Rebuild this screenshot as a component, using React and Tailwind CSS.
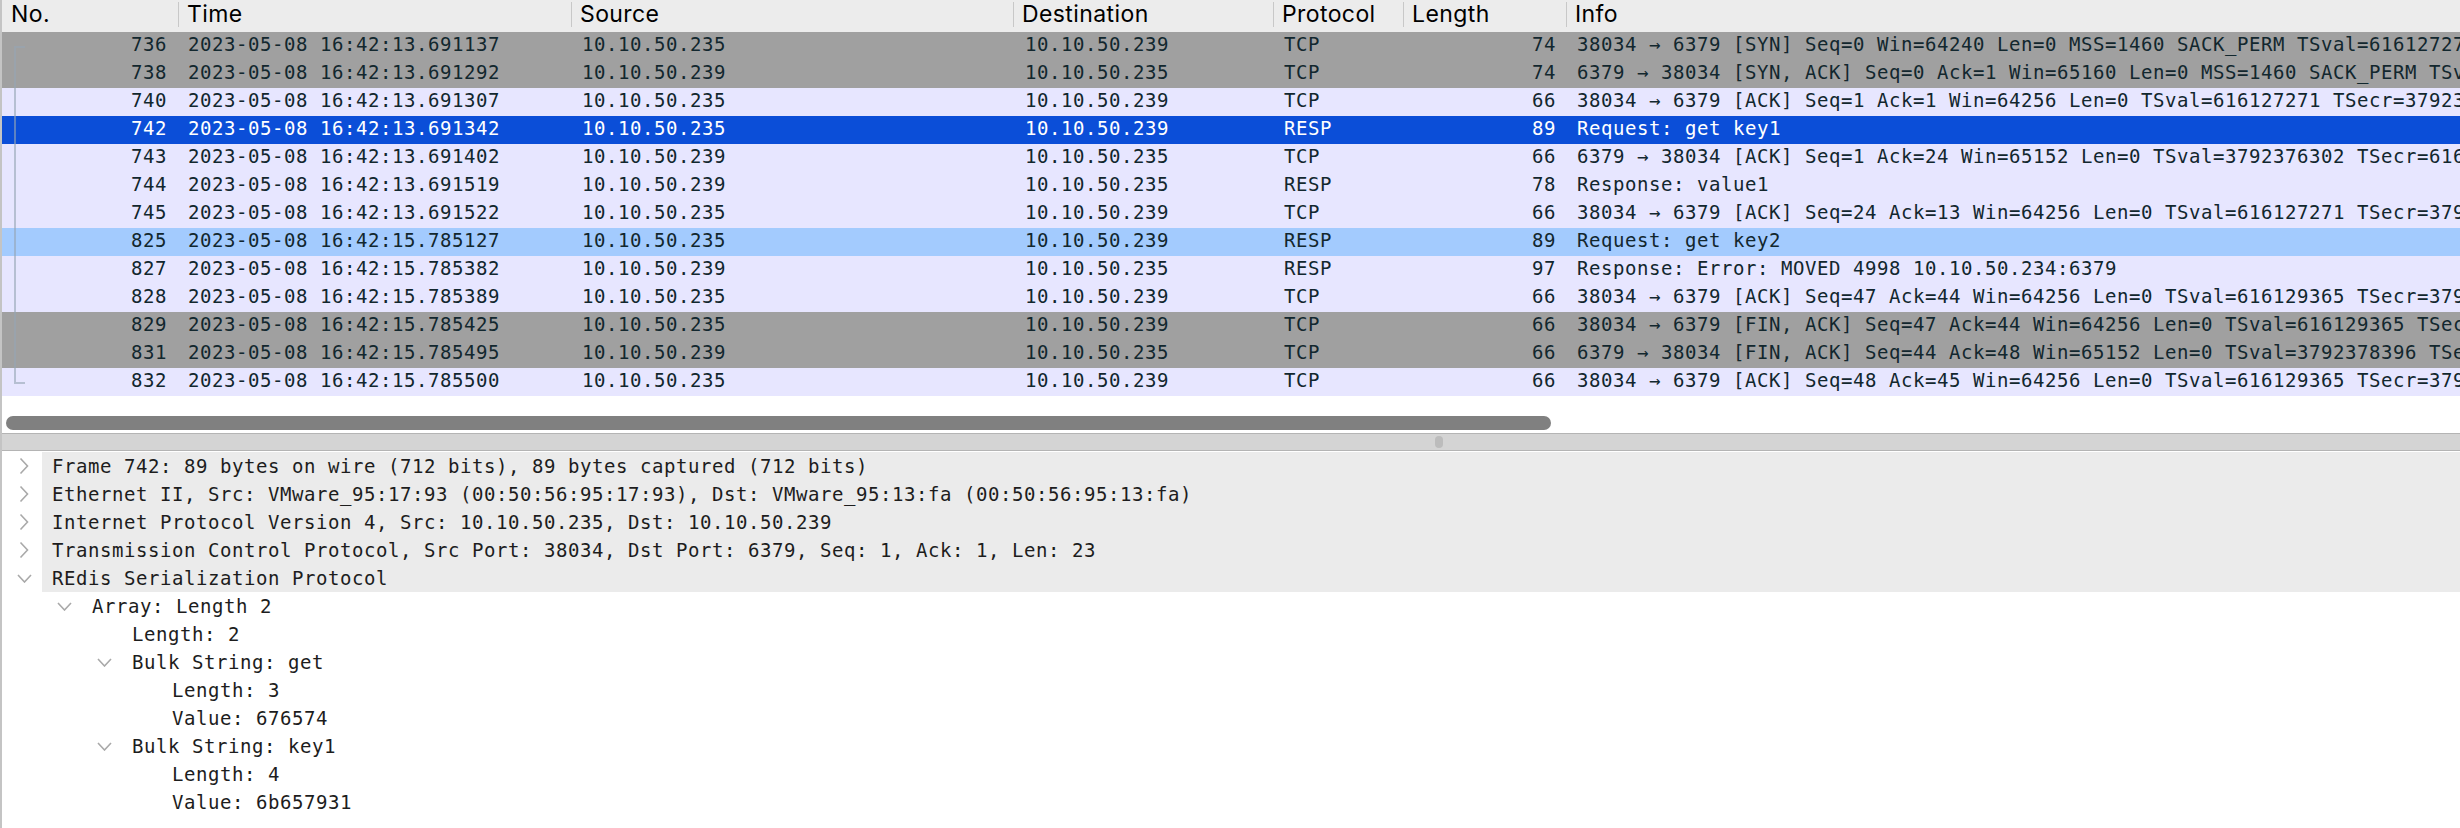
import React from 'react';

const COLS = 'grid grid-cols-[176px_393px_442px_260px_130px_163px_minmax(0,1fr)]';

const ROW_STYLE = {
  grey: 'bg-[#a0a0a0] text-[#12272e]',
  tcp: 'bg-[#e7e6ff] text-[#12272e]',
  selected: 'bg-[#0b4ed8] text-white',
  related: 'bg-[#a3cbfe] text-[#12272e]',
};

const ROWS = [
  { no: 736, time: '2023-05-08 16:42:13.691137', src: '10.10.50.235', dst: '10.10.50.239', proto: 'TCP', len: 74, info: '38034 → 6379 [SYN] Seq=0 Win=64240 Len=0 MSS=1460 SACK_PERM TSval=616127271 TSecr=0 WS=128', kind: 'grey' },
  { no: 738, time: '2023-05-08 16:42:13.691292', src: '10.10.50.239', dst: '10.10.50.235', proto: 'TCP', len: 74, info: '6379 → 38034 [SYN, ACK] Seq=0 Ack=1 Win=65160 Len=0 MSS=1460 SACK_PERM TSval=3792376302 TSecr=616127271 WS=128', kind: 'grey' },
  { no: 740, time: '2023-05-08 16:42:13.691307', src: '10.10.50.235', dst: '10.10.50.239', proto: 'TCP', len: 66, info: '38034 → 6379 [ACK] Seq=1 Ack=1 Win=64256 Len=0 TSval=616127271 TSecr=3792376302', kind: 'tcp' },
  { no: 742, time: '2023-05-08 16:42:13.691342', src: '10.10.50.235', dst: '10.10.50.239', proto: 'RESP', len: 89, info: 'Request: get key1', kind: 'selected' },
  { no: 743, time: '2023-05-08 16:42:13.691402', src: '10.10.50.239', dst: '10.10.50.235', proto: 'TCP', len: 66, info: '6379 → 38034 [ACK] Seq=1 Ack=24 Win=65152 Len=0 TSval=3792376302 TSecr=616127271', kind: 'tcp' },
  { no: 744, time: '2023-05-08 16:42:13.691519', src: '10.10.50.239', dst: '10.10.50.235', proto: 'RESP', len: 78, info: 'Response: value1', kind: 'tcp' },
  { no: 745, time: '2023-05-08 16:42:13.691522', src: '10.10.50.235', dst: '10.10.50.239', proto: 'TCP', len: 66, info: '38034 → 6379 [ACK] Seq=24 Ack=13 Win=64256 Len=0 TSval=616127271 TSecr=3792376302', kind: 'tcp' },
  { no: 825, time: '2023-05-08 16:42:15.785127', src: '10.10.50.235', dst: '10.10.50.239', proto: 'RESP', len: 89, info: 'Request: get key2', kind: 'related' },
  { no: 827, time: '2023-05-08 16:42:15.785382', src: '10.10.50.239', dst: '10.10.50.235', proto: 'RESP', len: 97, info: 'Response: Error: MOVED 4998 10.10.50.234:6379', kind: 'tcp' },
  { no: 828, time: '2023-05-08 16:42:15.785389', src: '10.10.50.235', dst: '10.10.50.239', proto: 'TCP', len: 66, info: '38034 → 6379 [ACK] Seq=47 Ack=44 Win=64256 Len=0 TSval=616129365 TSecr=3792378396', kind: 'tcp' },
  { no: 829, time: '2023-05-08 16:42:15.785425', src: '10.10.50.235', dst: '10.10.50.239', proto: 'TCP', len: 66, info: '38034 → 6379 [FIN, ACK] Seq=47 Ack=44 Win=64256 Len=0 TSval=616129365 TSecr=3792378396', kind: 'grey' },
  { no: 831, time: '2023-05-08 16:42:15.785495', src: '10.10.50.239', dst: '10.10.50.235', proto: 'TCP', len: 66, info: '6379 → 38034 [FIN, ACK] Seq=44 Ack=48 Win=65152 Len=0 TSval=3792378396 TSecr=616129365', kind: 'grey' },
  { no: 832, time: '2023-05-08 16:42:15.785500', src: '10.10.50.235', dst: '10.10.50.239', proto: 'TCP', len: 66, info: '38034 → 6379 [ACK] Seq=48 Ack=45 Win=64256 Len=0 TSval=616129365 TSecr=3792378396', kind: 'tcp' },
];

// level: indent depth, open: true/false for expandable, null for leaf
const DETAILS = [
  { level: 0, open: false, text: 'Frame 742: 89 bytes on wire (712 bits), 89 bytes captured (712 bits)' },
  { level: 0, open: false, text: 'Ethernet II, Src: VMware_95:17:93 (00:50:56:95:17:93), Dst: VMware_95:13:fa (00:50:56:95:13:fa)' },
  { level: 0, open: false, text: 'Internet Protocol Version 4, Src: 10.10.50.235, Dst: 10.10.50.239' },
  { level: 0, open: false, text: 'Transmission Control Protocol, Src Port: 38034, Dst Port: 6379, Seq: 1, Ack: 1, Len: 23' },
  { level: 0, open: true, text: 'REdis Serialization Protocol' },
  { level: 1, open: true, text: 'Array: Length 2' },
  { level: 2, open: null, text: 'Length: 2' },
  { level: 2, open: true, text: 'Bulk String: get' },
  { level: 3, open: null, text: 'Length: 3' },
  { level: 3, open: null, text: 'Value: 676574' },
  { level: 2, open: true, text: 'Bulk String: key1' },
  { level: 3, open: null, text: 'Length: 4' },
  { level: 3, open: null, text: 'Value: 6b657931' },
];

const INDENT = ['w-0', 'w-[40px]', 'w-[80px]', 'w-[120px]'];

const ChevronRight = () => (
  <svg width="10" height="18" viewBox="0 0 10 18" fill="none">
    <path d="M1.5 1.5 L8.5 9 L1.5 16.5" stroke="#a9a9a9" strokeWidth="1.6" />
  </svg>
);

const ChevronDown = () => (
  <svg width="15" height="9" viewBox="0 0 15 9" fill="none">
    <path d="M1 1 L7.5 8 L14 1" stroke="#a9a9a9" strokeWidth="1.6" />
  </svg>
);

const PacketRow = ({ row }) => (
  <div className={`${COLS} h-[28px] leading-[24px] whitespace-nowrap ${ROW_STYLE[row.kind]}`}>
    <div className="text-right pr-[11px]">{row.no}</div>
    <div className="pl-[10px]">{row.time}</div>
    <div className="pl-[11px]">{row.src}</div>
    <div className="pl-[12px]">{row.dst}</div>
    <div className="pl-[11px]">{row.proto}</div>
    <div className="text-right pr-[10px]">{row.len}</div>
    <div className="pl-[11px] overflow-hidden">{row.info}</div>
  </div>
);

export default function App() {
  const mono = "font-['DejaVu_Sans_Mono',monospace] text-[19px] tracking-[0.56px]";

  return (
    <div className="w-[2460px] h-[828px] overflow-hidden bg-white border-l-2 border-[#c4c4c4]">
      {/* packet list */}
      <div className="h-[433px] flex flex-col">
        <div className={`${COLS} h-[32px] bg-[#ececec] text-black font-['Inter',sans-serif] text-[23px] tracking-[0.4px] whitespace-nowrap`}>
          <div className="pl-[9px] leading-[29px]">No.</div>
          {['Time', 'Source', 'Destination', 'Protocol', 'Length', 'Info'].map(h => (
            <div key={h} className="flex items-start overflow-hidden">
              <div className="mt-[2px] h-[25px] w-px shrink-0 bg-[#c8c8c8]" />
              <span className="ml-[8px] leading-[29px]">{h}</span>
            </div>
          ))}
        </div>

        <div className={`relative ${mono}`}>
          {ROWS.map(r => <PacketRow key={r.no} row={r} />)}
          {/* conversation bracket */}
          <div className="absolute left-[12px] top-[14px] w-[2px] h-[338px] bg-[rgba(150,165,180,0.6)]" />
          <div className="absolute left-[14px] top-[14px] w-[9px] h-[2px] bg-[rgba(150,165,180,0.6)]" />
          <div className="absolute left-[14px] top-[350px] w-[9px] h-[2px] bg-[rgba(150,165,180,0.6)]" />
        </div>

        <div className="pt-[20px] pl-[4px]">
          <div className="w-[1545px] h-[14px] rounded-full bg-[#808080]" />
        </div>
      </div>

      {/* splitter */}
      <div className="h-[18px] border-y border-[#b4b4b4] bg-[#d4d4d4] flex items-center pl-[1433px]">
        <div className="w-[8px] h-[12px] rounded-full bg-[#bcbcbc]" />
      </div>

      {/* packet details */}
      <div className={`pt-[1px] text-[#1d1d1d] whitespace-nowrap ${mono}`}>
        {DETAILS.map((d, i) => (
          <div key={i} className="flex h-[28px] items-center">
            <div className={`${INDENT[d.level]} shrink-0`} />
            <div className="w-[40px] shrink-0 flex justify-center pl-[4px]">
              {d.open === true && <ChevronDown />}
              {d.open === false && <ChevronRight />}
            </div>
            <div className={`flex-1 h-full leading-[28px] pl-[10px] ${d.level === 0 ? 'bg-[#ebebeb]' : ''}`}>
              {d.text}
            </div>
          </div>
        ))}
      </div>
    </div>
  );
}
